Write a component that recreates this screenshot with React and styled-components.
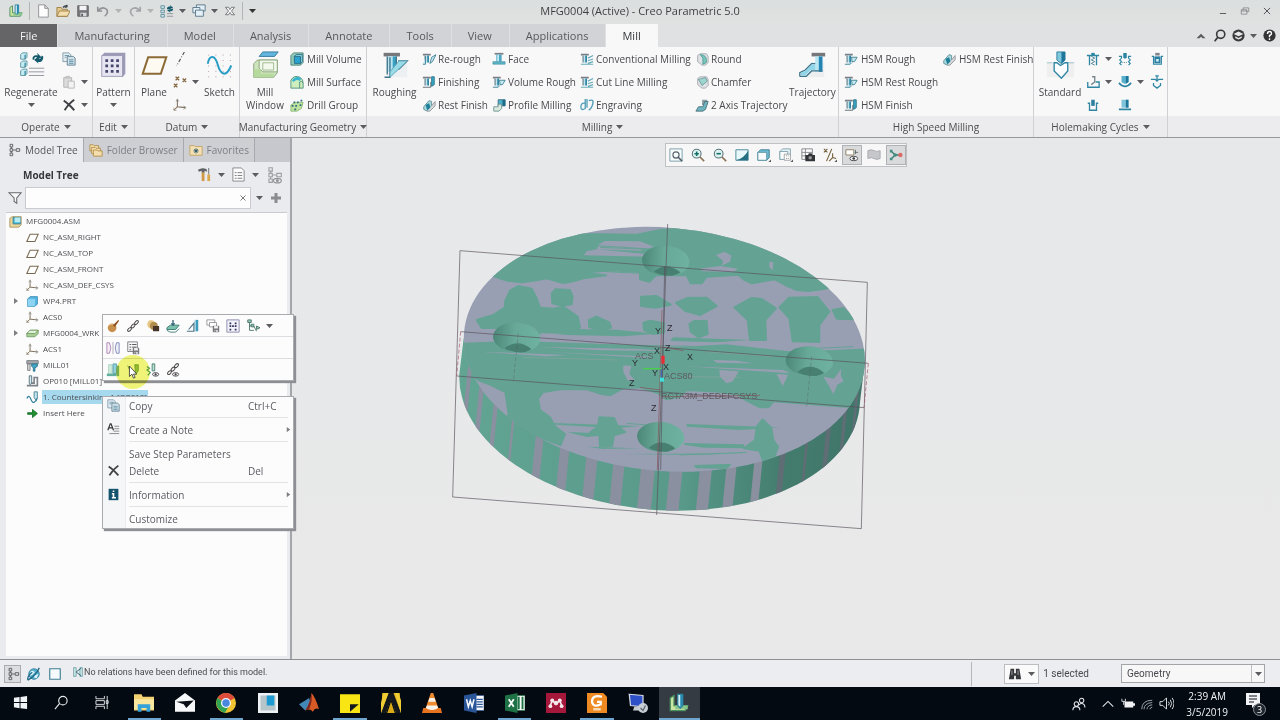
import React from 'react';
import styled, { createGlobalStyle } from 'styled-components';

const GlobalStyle = createGlobalStyle`
  * {
    box-sizing: border-box;
  }

  body {
    margin: 0;
    background: #e8e8e9;
    color: #4a4a4e;
    font-family: 'Open Sans', 'Noto Sans', sans-serif;
    font-size: 10px;
    line-height: 14px;
  }

  button,
  input,
  select,
  kbd {
    margin: 0;
    padding: 0;
    border: 0;
    background: none;
    color: inherit;
    font: inherit;
  }

  svg {
    display: block;
    flex: none;
  }
`;

/* ---------- icons ---------- */

const cutter = (
  <>
    <path d="M1 2h9v2H1z" fill="#7b7f84" />
    <path d="M3 4h5v8H3z" fill="#bfe3ee" />
    <path d="M6 4h2v8H6z" fill="#2f86a3" />
    <path d="M3.5 4v8" stroke="#55656d" />
  </>
);

const cubeStack = (
  <>
    <g fill="#c5ebf1" stroke="#5b95a3">
      <path d="M4 4l2-2h5v5l-2 2H4zM4 13l2-2h5v5l-2 2H4zM4 22l2-2h5v5l-2 2H4z" />
    </g>
    <path d="M9 4v5M9 13v5M9 22v5" stroke="#3d8ba1" strokeWidth="1.5" />
    <path d="M13 20h17M13 24h17M13 28h17" transform="translate(0 -1)" stroke="#8c9096" />
    <path d="M17 9c0-4 3-5 6-4l-1-3 5 5-5 3v-3c-2-1-3 0-3 3zM29 6c0 4-2 7-6 6l1 2-5-4 4-4v3c3 0 4-1 4-4z" fill="#125a6c" />
  </>
);

const creoLogo = (
  <>
    <path d="M1 4l3-2v8h11l-2 4H1z" fill="#c9e6a0" stroke="#4b8d62" />
    <path d="M5 10h10v3H5z" fill="#88c58c" />
    <path d="M7 1h4v9l-2 2-2-2z" fill="#d4f1fa" stroke="#2f7f99" />
    <path d="M9 1h2v9l-2 2z" fill="#2588b0" />
  </>
);

const csys = (
  <g fill="none" strokeWidth="1.2">
    <path d="M5 2v8l9 1" stroke="#7b6f60" />
    <path d="M5 10l-4 4" stroke="#8a6d4a" />
    <path d="M3.500 4L5 1l1.500 3M12 9l3 2-3 2M1 11v3h3" stroke="#8b857a" strokeWidth="0.800" />
  </g>
);

const chain = (
  <g fill="none" stroke="#4f4b4b" strokeWidth="1.200">
    <ellipse cx="4" cy="12" rx="2.700" ry="1.500" transform="rotate(-45 4 12)" />
    <ellipse cx="8" cy="8" rx="2.700" ry="1.500" transform="rotate(-45 8 8)" />
    <ellipse cx="12" cy="4" rx="2.700" ry="1.500" transform="rotate(-45 12 4)" />
  </g>
);

const floppy = (
  <g>
    <path d="M2 2h12v12H2z" fill="#77777b" stroke="#5d5d61" />
    <path d="M4 2h8v5H4z" fill="#f3f3f5" />
    <path d="M5 10h7v4H5z" fill="#d7d8dc" />
    <path d="M6 11h2v3H6z" fill="#5d5d61" />
  </g>
);

const eye = (
  <g fill="none" stroke="#3d3d41">
    <ellipse cx="11" cy="13" rx="3.500" ry="2" />
    <circle cx="11" cy="13" r="0.800" fill="#3d3d41" />
  </g>
);

const treeNodes = (
  <g fill="none" stroke="#55565a">
    <path d="M3.500 1.500h3v3h-3zM3.500 6.500h3v3h-3zM3.500 11.500h3v3h-3zM10.500 6.500h4v3h-4zM5 4.500v2M5 9.500v2M7 8h3" />
  </g>
);

const flyout = <path d="M13 16h3v-3z" fill="#55565a" />;

const icons = {
  creo: creoLogo,
  newFile: <path d="M3 1h7l4 4v10H3zM10 1v4h4" fill="#fdfdfe" stroke="#8b8c90" />,
  open: (
    <>
      <path d="M1 4h5l1 2h6v8H1z" fill="#e5c88c" stroke="#9a7b43" />
      <path d="M4 8h12l-3 6H1z" fill="#f6dfae" stroke="#9a7b43" />
      <path d="M8 4q3-3 5-1l-1-2M13 3l-3 1" fill="none" stroke="#3b4349" strokeWidth="1.500" />
    </>
  ),
  save: floppy,
  undo: <path d="M2 3v5h5M2 8q5-6 10-2 3 4-2 8" fill="none" stroke="#8f9194" strokeWidth="1.800" />,
  redo: <path d="M14 3v5H9M14 8Q9 2 4 6q-3 4 2 8" fill="none" stroke="#a1a3a6" strokeWidth="1.800" />,
  regenSmall: (
    <>
      <path d="M1 2h4v3H1zM1 7h4v3H1zM1 12h4v3H1z" fill="#cfe9ef" stroke="#5c8a97" />
      <path d="M8 11h7M8 14h7" stroke="#8c9096" />
      <path d="M8 6q0-4 4-3l-1-2 4 3-4 2M15 5q0 4-4 3l1 2-4-3" fill="#125a6c" />
    </>
  ),
  windows: (
    <g fill="#e3eff6" stroke="#547184">
      <path d="M5 1h10v7H5z" />
      <path d="M1 4h8v6H1z" />
      <path d="M4 7h9v7H4z" />
    </g>
  ),
  closeWindow: <path d="M2 3h4l2 3 2-3h4l-4 5 4 5h-4l-2-3-2 3H2l4-5z" fill="#f8f8f8" stroke="#56575b" />,
  minimize: <path d="M3 12h10" stroke="#55565a" strokeWidth="1.500" />,
  restore: <path d="M5 6V3h9v6h-3M2 6h9v7H2zM2 8h9" fill="none" stroke="#6b6c70" />,
  close: <path d="M3 3l10 10M13 3L3 13" stroke="#4e4f53" strokeWidth="1.500" />,
  chevronUp: <path d="M2 11l6-6 6 6h-4L8 9l-2 2z" fill="#5a5b5f" />,
  search: (
    <g fill="none" stroke="#3b3b3e" strokeWidth="2">
      <circle cx="9.500" cy="6.500" r="5" />
      <path d="M6 10l-4 5" />
    </g>
  ),
  learn: (
    <>
      <circle cx="8" cy="8" r="7.500" fill="#3b3b3e" />
      <path d="M2 6l6-3 6 3-6 3zM4 9l4 2 4-2v2l-4 2-4-2z" fill="#e9e9ea" />
    </>
  ),
  help: (
    <>
      <circle cx="8" cy="8" r="7.500" fill="#343437" />
      <path d="M5.500 6q0-3 2.500-3t2.500 2.500Q10.500 7 8 8v2M8 11.500v2" fill="none" stroke="#fff" strokeWidth="1.700" />
    </>
  ),
  regenerate: cubeStack,
  copy: (
    <>
      <path d="M1 1h7l2 2v8H1z" fill="#e4ecf2" stroke="#7d98a8" />
      <path d="M6 5h7l2 2v8H6z" fill="#cfdfe8" stroke="#5f7f91" />
      <path d="M3 4h5M3 6h2M8 9h5M8 11h5M8 13h5" stroke="#5f93a6" />
    </>
  ),
  paste: (
    <>
      <path d="M2 3h9v11H2z" fill="#dcdcdc" stroke="#b0b0b2" />
      <path d="M4 1h5v3H4z" fill="#c3c3c5" />
      <path d="M7 7h7v8H7z" fill="#f2f2f2" stroke="#b5b5b7" />
    </>
  ),
  cross: <path d="M2 3q5 3 12 11M14 2Q8 6 3 14" fill="none" stroke="#3f4044" strokeWidth="2.200" />,
  pattern: (
    <>
      <path d="M3 5l3-3h23v23l-3 4z" fill="#9c9ab6" />
      <path d="M3 5h23v23H3z" fill="#e6e5f1" stroke="#9b99b4" />
      <g fill="#45446c">
        <path d="M7 9h3v3H7zM13 9h3v3h-3zM19 9h3v3h-3zM7 15h3v3H7zM13 15h3v3h-3zM19 15h3v3h-3zM7 21h3v3H7zM13 21h3v3h-3zM19 21h3v3h-3z" />
      </g>
    </>
  ),
  plane: <path d="M9 7h20l-6 18H3z" fill="#fdfaf2" stroke="#8b6a35" strokeWidth="2.200" />,
  axis: <path d="M13 0L4 16" stroke="#55504a" strokeWidth="1.300" strokeDasharray="4 2 1 2" />,
  points: <path d="M3 2l4 4M7 2L3 6M11 4l4 4M15 4l-4 4M1 10l4 4M5 10l-4 4" stroke="#84673f" strokeWidth="1.400" />,
  csys,
  sketch: (
    <>
      <path d="M4 4v25M12 4v25M20 4v25M28 4v25" stroke="#b38f94" strokeDasharray="1 5" />
      <path d="M3 14C5 4 11 4 14 15s9 15 15 1" fill="none" stroke="#2b9ec5" strokeWidth="2.200" />
    </>
  ),
  millWindow: (
    <>
      <path d="M13 1h17l-4 5H9z" fill="#62b5dd" stroke="#34789a" />
      <path d="M3 14l4-4h22v14l-4 5H3z" fill="#cfe3bd" stroke="#85a278" />
      <path d="M9 10h20v13H13l-4-4z" fill="#f4f9ee" stroke="#85a278" />
      <path d="M3 20h8v5h14v4H3z" fill="#b6d99d" />
      <path d="M13 13h12v8H13z" fill="none" stroke="#98b58a" />
    </>
  ),
  millVolume: (
    <>
      <path d="M1 4l3-3h11v11l-3 3H1z" fill="#8fc9b5" stroke="#4e7f78" />
      <path d="M5 5h7v8H5z" fill="#2aa1cf" stroke="#246b86" />
      <path d="M5 5l2-2h7v8l-2 2V5z" fill="#9be0ef" stroke="#246b86" />
    </>
  ),
  millSurface: (
    <>
      <path d="M1 15V6q4-7 11-3 3 2 3 6v6z" fill="#cfeebd" stroke="#4b8f79" />
      <path d="M2 6q5-7 11-2l-2 3Q8 4 4 8z" fill="#3bb6ce" />
      <path d="M11 15V8q2-2 4 1" fill="none" stroke="#4b8f79" />
    </>
  ),
  drillGroup: (
    <>
      <path d="M1 8l5-3h9l-2 7-5 3H1z" fill="#bfe39d" stroke="#8cb877" />
      <path d="M4 4h2v2H4zM8 4h2v2H8zM12 2h2v2h-2zM2 8h2v2H2zM6 8h2v2H6zM11 7h2v2h-2zM5 12h2v2H5z" fill="#2d6d82" />
    </>
  ),
  roughing: (
    <>
      <path d="M14 12h16v17H8z" fill="#edf0f2" />
      <path d="M4 2h18v4H4z" fill="#77787c" />
      <path d="M8 6h10v17H8z" fill="#b9e6f2" />
      <path d="M14 6h4v17h-4z" fill="#3aa0c4" />
      <path d="M8 6v20M5 29h6V7M18 6v14h3l9-9H20" fill="none" stroke="#3f7489" strokeWidth="1.500" />
      <path d="M21 11h9L11 29v-6z" fill="#9adbe8" stroke="#5fa8b9" />
    </>
  ),
  rerough: (
    <>
      {cutter}
      <path d="M1 14h3V5M9 13l3-2 4-8-5 3z" fill="#bfe6ec" stroke="#3e7f92" />
    </>
  ),
  finishing: (
    <>
      {cutter}
      <path d="M1 14h9V8" fill="none" stroke="#55656d" />
      <path d="M11 2h3v9l-3 2z" fill="#39a7c4" stroke="#2c7288" />
    </>
  ),
  restFinish: (
    <>
      <path d="M2 10L8 3l3 1v8l-5 3-4-2z" fill="#a8d9dd" stroke="#5e8d94" />
      <path d="M4 8l4-2 2 5-4 3z" fill="#1f7f9a" />
      <path d="M11 9l4-5v5l-6 6H6" fill="#d7d9db" stroke="#909498" />
    </>
  ),
  face: (
    <>
      <path d="M3 1h10v2H3z" fill="#7b7f84" />
      <path d="M5 3h6v8H5z" fill="#4aa5c1" />
      <path d="M6 3h2v8H6z" fill="#c7ecf5" />
      <path d="M1 11h14v3H1z" fill="#5bb3c8" stroke="#31798e" strokeWidth="0.500" />
    </>
  ),
  volumeRough: (
    <>
      {cutter}
      <path d="M1 14h6l2-2M8 6h7l-3 5H9v-3z" fill="#c4e9ee" stroke="#3e7f92" />
    </>
  ),
  profile: (
    <>
      <path d="M7 2h8v7H7z" fill="#4eb0cc" stroke="#35707f" />
      <path d="M12 2h3v7h-3z" fill="#1d6b86" />
      <path d="M2 10h5V7h4v5l-3 3H2z" fill="#d9eadd" stroke="#6d8f93" />
    </>
  ),
  conventional: (
    <>
      {cutter}
      <path d="M9 7l6-3M9 10l6-2M9 13l6-2M1 14h14" stroke="#68aab8" strokeWidth="1.300" />
    </>
  ),
  engraving: <path d="M6 1v11q-5 3-5-2t5-4M8 1v10M10 14q5-4 5-11M10 3q5-2 5 2" fill="none" stroke="#4f9db5" strokeWidth="1.500" />,
  round: (
    <>
      <path d="M3 4l3-2h7l2 3v7l-3 3H8l-5-4z" fill="#dfe1e4" stroke="#a4a8ae" />
      <path d="M6 3q8 0 7 9l-4 2V7z" fill="#79c7bb" stroke="#4f9a98" />
    </>
  ),
  chamfer: (
    <>
      <path d="M3 4l3-2h7l2 3v7l-3 3H8l-5-4z" fill="#dfe1e4" stroke="#a4a8ae" />
      <path d="M4 5l8-2 2 4-6 5z" fill="#9dd6cf" stroke="#6b989c" />
    </>
  ),
  twoAxis: (
    <>
      <path d="M8 2h6v6H8z" fill="#8fa0a7" />
      <path d="M1 15l3-5h5l2-6h4l-3 9-3 2z" fill="#6fb5bf" stroke="#4a6f77" />
    </>
  ),
  trajectory: (
    <>
      <path d="M14 12h15v17H4z" fill="#eceef0" />
      <path d="M15 2h15v4H15z" fill="#77787c" />
      <path d="M19 6h8v17h-8z" fill="#b9e6f2" />
      <path d="M23 6h4v17h-4z" fill="#2485b4" />
      <path d="M2 28h7l6-6h12M2 28v-4l6-3 7-7h4" fill="none" stroke="#3f7489" strokeWidth="1.500" />
      <path d="M3 24l5-2 7-7h4v6h-5l-6 6H3z" fill="#8fd6e8" />
    </>
  ),
  standard: (
    <>
      <path d="M1 13h30v16H1z" fill="#efefef" />
      <path d="M1 13h6M25 13h6" stroke="#98bfcb" />
      <path d="M12 1h9v9l-4 4-5-4z" fill="#7fc9de" stroke="#2d7c98" />
      <path d="M17 1h4v9l-4 4z" fill="#1e769a" />
      <path d="M9 13h3l4 3 5-3h3v9l-7 8-8-8z" fill="#fbfdfe" stroke="#2f86a3" strokeWidth="1.500" />
    </>
  ),
  drillDeep: (
    <>
      <path d="M1 4h3v11M15 4h-3v11M4 4h8" fill="none" stroke="#2f86a3" strokeWidth="1.500" />
      <path d="M6 1h4v3H6z" fill="#2f86a3" />
      <path d="M6 5l4 2-4 2 4 2-4 2 4 2" fill="none" stroke="#4b7d8e" />
    </>
  ),
  drillTap: (
    <>
      <path d="M1 5h3v2l-2 2 2 2-2 2 2 2M15 5h-3v2l2 2-2 2 2 2-2 2" fill="none" stroke="#2f86a3" strokeWidth="1.300" />
      <path d="M6 1h4v5l-2 2-2-2z" fill="#2f86a3" />
      <path d="M5 12h6" stroke="#4b7d8e" strokeDasharray="1 1" />
    </>
  ),
  drillWeb: (
    <>
      <path d="M2 5h2v9h9V5h2" fill="none" stroke="#2f86a3" strokeWidth="1.300" />
      <path d="M6 1h5v3H6z" fill="#808488" />
      <path d="M5 5h7v8H5z" fill="#2b7fa0" />
      <path d="M7 8h3v3H7z" fill="#d2edf5" />
    </>
  ),
  drillFace: (
    <>
      <path d="M2 8v6h13V8h-4" fill="none" stroke="#2f86a3" strokeWidth="1.500" />
      <path d="M7 2h3v6l-4 3" fill="none" stroke="#74858d" strokeWidth="1.500" />
    </>
  ),
  drillBore: (
    <>
      <path d="M4 1h8v7q-4 4-8 0z" fill="#57b0cc" />
      <path d="M9 1h3v7l-3 2z" fill="#1e769a" />
      <path d="M1 9q7 8 14 0" fill="none" stroke="#2f86a3" strokeWidth="1.800" />
    </>
  ),
  drillSink: <path d="M1 5h5l2 2 2-2h5M4 9v3l4 3 4-3V9M8 1v6M6 1h4" fill="none" stroke="#2f86a3" strokeWidth="1.500" />,
  drillRib: (
    <>
      <path d="M2 6h2v8h8V6h2" fill="none" stroke="#2f86a3" strokeWidth="1.500" />
      <path d="M6 2h4v7H6z" fill="#2b7fa0" />
    </>
  ),
  drillFlat: (
    <>
      <path d="M4 2h8v9H4z" fill="#7fc3d8" />
      <path d="M9 2h3v9H9z" fill="#1e769a" />
      <path d="M1 12h14v2H1z" fill="#2f86a3" />
    </>
  ),
  tree: treeNodes,
  folders: (
    <g fill="#f4dfad" stroke="#b18d4a">
      <path d="M1 2h4l1 1h5v6H1z" />
      <path d="M3 5h4l1 1h5v6H3z" />
      <path d="M5 8h4l1 1h5v6H5z" />
    </g>
  ),
  favorites: (
    <>
      <path d="M1 3h5l1 1h8v10H1z" fill="#f3e0b4" stroke="#c3a15f" />
      <path d="M8 6v6M5 9h6M6 7l4 4M10 7l-4 4" stroke="#22546a" />
    </>
  ),
  tools: (
    <>
      <path d="M1 3q4-3 9-1l1 3-3-1v2H5V4L2 5z" fill="#5f6165" />
      <path d="M5 6h3v9H5z" fill="#d09a48" />
      <path d="M12 1h1v7h-1z" fill="#6d7175" />
      <path d="M11 8h3v7h-3z" fill="#dba74d" />
    </>
  ),
  listFile: (
    <>
      <path d="M2 1h9l3 3v11H2z" fill="#fdfdfe" stroke="#85868a" />
      <path d="M4 6h2M4 9h2M4 12h2M7 6h5M7 9h5M7 12h5" stroke="#77787c" />
    </>
  ),
  treeHidden: (
    <g opacity="0.500">
      {treeNodes}
      {eye}
    </g>
  ),
  filter: <path d="M1 2h14L10 8v6l-3-2V8z" fill="#f8f8f9" stroke="#66676b" strokeWidth="1.200" />,
  plus: <path d="M8 3v10M3 8h10" stroke="#8b8c90" strokeWidth="3" />,
  assembly: (
    <>
      <path d="M1 4l3-2h11v10l-3 3H1z" fill="#ecd59a" stroke="#a2905a" />
      <path d="M5 3h9v8H5z" fill="#46b7cc" stroke="#357d8f" />
      <path d="M7 3h7v6H7z" fill="#b6ebf2" />
    </>
  ),
  planeSmall: <path d="M5 4h10l-4 9H1z" fill="#fff" stroke="#77694f" strokeWidth="1.300" />,
  part: (
    <>
      <path d="M2 5l3-3h9v9l-3 3H2z" fill="#58b7e4" stroke="#2f82ab" />
      <path d="M2 5h9v9H2z" fill="#8dd4f3" />
    </>
  ),
  workpiece: (
    <>
      <path d="M1 8l4-4h10v4l-4 4H1z" fill="#a7cf94" stroke="#6e9763" />
      <path d="M1 8l4-4h10l-4 4z" fill="#e3f3d9" stroke="#6e9763" />
    </>
  ),
  machine: (
    <>
      <path d="M1 2h14v4H1z" fill="#a5a9ad" stroke="#6e7276" />
      <path d="M2 6h3v8H2z" fill="#d8dadc" stroke="#6e7276" />
      <path d="M7 6h7v3l-3 2v4H9v-4L7 9z" fill="#42a5c2" stroke="#226d86" />
    </>
  ),
  operation: (
    <>
      <path d="M1 13h13V3h-4v7H6" fill="none" stroke="#7d8388" strokeWidth="2" />
      <path d="M4 1h3v9l-2 2-1-2z" fill="#d9eef4" stroke="#44616d" />
    </>
  ),
  step: (
    <>
      <path d="M1 9q3-5 5 1t5 3q2-1 3-5" fill="none" stroke="#2a7d99" strokeWidth="1.500" />
      <path d="M10 1h4v7l-2 3-2-3z" fill="#c1e4ee" stroke="#39798f" />
    </>
  ),
  insert: <path d="M2 7h6V3l6 5-6 5V9H2z" fill="#1f9133" stroke="#0c6a1e" />,
  expand: <path d="M4 2l8 6-8 6z" fill="#7e7f83" />,
  paint: (
    <>
      <circle cx="7" cy="10" r="5" fill="#c7914d" />
      <path d="M8 7l6-6 1 1-5 7z" fill="#8d4f21" />
      <path d="M4 7q2-2 4-1" stroke="#f1d6a6" fill="none" />
    </>
  ),
  chain,
  spheres: (
    <>
      <circle cx="6" cy="6" r="4.500" fill="#e4c583" />
      <circle cx="9" cy="8" r="4.500" fill="#b08c4c" />
      <path d="M8 8h7v6H8z" fill="#453427" />
    </>
  ),
  editStep: (
    <>
      <path d="M1 10l4-3h10l-4 5H1z" fill="#7bc2ae" stroke="#35766b" />
      <path d="M1 13l4 2h6l4-4" fill="none" stroke="#35766b" />
      <path d="M8 1v6M6 5l2 2 2-2" fill="none" stroke="#316177" strokeWidth="1.500" />
    </>
  ),
  toolPath: (
    <>
      <path d="M10 1h4v13h-4z" fill="#3d9bbb" />
      <path d="M10 1h1v13h-1z" fill="#d6eef5" />
      <path d="M1 14h8V5L3 12" fill="none" stroke="#4b7382" strokeWidth="1.300" />
    </>
  ),
  copySave: (
    <>
      <path d="M1 1h9v6H1z" fill="#fff" stroke="#929397" />
      <path d="M4 4h8v5H4z" fill="#fff" stroke="#929397" />
      <g transform="translate(7 7) scale(0.550)">{floppy}</g>
    </>
  ),
  patternSmall: (
    <>
      <path d="M1 1h14v14H1z" fill="#f3f3fb" stroke="#8483a5" />
      <path d="M4 4h2v2H4zM10 4h2v2h-2zM4 7h2v2H4zM10 7h2v2h-2zM4 11h2v2H4zM10 11h2v2h-2zM7 7h2v2H7z" fill="#33325c" />
    </>
  ),
  treeFlag: (
    <>
      <path d="M2 1h4v3H2zM6 6h3v3H6zM4 4v4h2M9 8l3 6M12 8l4 2-4 2z" fill="#9ac9b9" stroke="#477266" />
      <path d="M4 8v5h5" fill="none" stroke="#477266" />
    </>
  ),
  mirror: (
    <>
      <path d="M1 2h3q3 6 0 12H1z" fill="#f7edf7" stroke="#a77fb0" />
      <path d="M15 2h-3q-3 6 0 12h3z" fill="#eef1fa" stroke="#7d82b5" />
      <path d="M8 1v14" stroke="#aaa4b2" />
    </>
  ),
  listSave: (
    <>
      <path d="M2 1h11v11H2z" fill="#f9f9fa" stroke="#77787c" />
      <path d="M4 4h2M4 7h2M4 10h2M7 4h5M7 7h5" stroke="#44454a" />
      <g transform="translate(7 7) scale(0.550)">{floppy}</g>
    </>
  ),
  toolBlock: (
    <>
      <path d="M1 12h11v3H1z" fill="#5fae9e" />
      <path d="M3 2h4v10H3z" fill="#d3eedd" stroke="#a5cfba" />
      <path d="M8 1h4v11H8z" fill="#8fd0dc" stroke="#5ba0ad" />
      <path d="M12 3h3v12h-3z" fill="#7fb39f" />
    </>
  ),
  playStep: <path d="M10 2h4v7l-3 4zM2 3l4 9 3 2" fill="#9cc65a" stroke="#75a044" />,
  stepEye: (
    <>
      <path d="M1 4l3 2-3 2 4 3-3 3" fill="none" stroke="#56a081" strokeWidth="1.300" />
      <path d="M7 1h3v8H7z" fill="#c2e3cd" stroke="#3e7a71" />
      {eye}
    </>
  ),
  chainEye: (
    <>
      <g transform="translate(0 -1)">{chain}</g>
      {eye}
    </>
  ),
  note: (
    <>
      <path d="M1 9l3-8h1l3 8M2 6h5" fill="none" stroke="#37383c" strokeWidth="1.500" />
      <path d="M9 4h6M9 7h6M8 10h7M3 13h12" stroke="#77787c" />
    </>
  ),
  info: (
    <>
      <path d="M2 1h12v14H2z" fill="#14526d" />
      <path d="M8 3v2M6 7h2v5M6 12h5" fill="none" stroke="#fff" strokeWidth="2" />
    </>
  ),
  zoomFit: (
    <>
      <path d="M1 1h14v14H1z" fill="#f5fafb" stroke="#7298a4" />
      <circle cx="8" cy="8" r="3.500" fill="none" stroke="#53606a" strokeWidth="1.300" />
      <path d="M10 10l5 5" stroke="#53606a" strokeWidth="1.800" />
    </>
  ),
  zoomIn: (
    <>
      <circle cx="6.500" cy="6.500" r="5" fill="#dff2f1" stroke="#56767b" strokeWidth="1.200" />
      <path d="M4 6.500h5M6.500 4v5" stroke="#117065" strokeWidth="1.800" />
      <path d="M10 10l5 5" stroke="#8d7657" strokeWidth="2" />
    </>
  ),
  zoomOut: (
    <>
      <circle cx="6.500" cy="6.500" r="5" fill="#dff2f1" stroke="#56767b" strokeWidth="1.200" />
      <path d="M4 6.500h5" stroke="#117065" strokeWidth="1.800" />
      <path d="M10 10l5 5" stroke="#8d7657" strokeWidth="2" />
    </>
  ),
  repaint: (
    <>
      <path d="M1 2h14v12H1z" fill="#e8f7f9" stroke="#418294" />
      <path d="M15 3v11H1q9-2 14-11z" fill="#246f81" />
    </>
  ),
  display: (
    <>
      <path d="M1 5l3-3h10v9l-3 3H1z" fill="#6dbbd4" stroke="#3e7a8d" />
      <path d="M1 5h10v9H1z" fill="#f8fcfd" stroke="#5f95a5" />
      {flyout}
    </>
  ),
  views: (
    <>
      <path d="M1 4l3-3h9v8l-3 4H1z" fill="#e6f1f4" stroke="#7ba0ab" />
      <path d="M1 4h9v9H1z" fill="#fafdfe" stroke="#7ba0ab" />
      <path d="M6 7h7v7H6z" fill="#fff" stroke="#9b9ca0" />
      <path d="M8 9h4M8 12h4" stroke="#77787c" strokeDasharray="1 1" />
      {flyout}
    </>
  ),
  camera: (
    <>
      <path d="M1 1h12v12H1zM1 5h12M1 9h12M5 1v12" fill="#fff" stroke="#7d7e82" />
      <path d="M5 8h3l1-2h3l1 2h3v7H5z" fill="#333438" />
      <circle cx="10.500" cy="11" r="2" fill="#97989c" />
    </>
  ),
  datums: (
    <>
      <path d="M1 1l4 4M5 1L1 5M10 1L4 15M11 6v5l4 1M11 11l-4 4" fill="none" stroke="#76633f" strokeWidth="1.300" />
      {flyout}
    </>
  ),
  annotations: (
    <>
      <path d="M1 2h9v6H1z" fill="#fff" stroke="#8a7a5c" />
      <path d="M11 5h4M12 2v5" stroke="#5e6b6e" />
      <ellipse cx="10" cy="12" rx="4.500" ry="2.500" fill="#fff" stroke="#38393d" />
      <circle cx="10" cy="12" r="1.500" fill="#38393d" />
    </>
  ),
  shade: <path d="M1 3q4-2 7 0t7 0v9q-4 2-7 0t-7 0z" fill="#c6c7ca" stroke="#a5a6aa" />,
  spin: (
    <>
      <path d="M7 8L2 3M7 8l-5 5M7 8h5" stroke="#35756c" strokeWidth="1.500" />
      <circle cx="7" cy="8" r="2" fill="#438f83" />
      <circle cx="13" cy="8" r="2.500" fill="#de6a68" />
      <path d="M1 2h3v3H1zM1 11h3v3H1z" fill="#438f83" />
    </>
  ),
  globe: (
    <>
      <circle cx="8" cy="8" r="6" fill="#58b1cf" stroke="#2f7f9d" />
      <path d="M4 5q3-2 5 1l-3 3-3 1zM9 9l4-1-2 5-3-1z" fill="#d8f2f8" />
      <path d="M1 15Q10 10 14 1M1 15q-1-5 5-9" fill="none" stroke="#226a88" strokeWidth="1.500" />
    </>
  ),
  pane: <path d="M2 2h12v12H2z" fill="#f5fbfd" stroke="#3e7c93" strokeWidth="1.300" />,
  relations: (
    <>
      <path d="M1 1h4v14H1zM11 1h4v14h-4z" fill="#cfe6e8" stroke="#4a8a92" />
      <path d="M13 2L5 8l8 6" fill="none" stroke="#2f6470" strokeWidth="1.500" />
    </>
  ),
  binoculars: (
    <>
      <path d="M3 2h4v5h2V2h4l2 12H9v-4H7v4H1z" fill="#35363a" />
      <path d="M4 4h1v5H4zM11 4h1v5h-1z" fill="#a7a8ac" />
    </>
  ),
  start: <path d="M1 3l6-1v5.500H1zM8 2l7-1v6.500H8zM1 8.500h6V14l-6-1zM8 8.500h7V15l-7-1z" fill="#f1f4f6" />,
  taskSearch: (
    <g fill="none" stroke="#e8ebee" strokeWidth="1.200">
      <circle cx="9.500" cy="6" r="4.500" />
      <path d="M6 9l-5 6" />
    </g>
  ),
  taskView: <path d="M1 1v3h9V1M1 15v-3h9v3M1 6h9v4H1zM13 1v14M12 6h2v3h-2z" fill="none" stroke="#dfe3e6" />,
  explorer: (
    <>
      <path d="M0 1h6l1 2h9v11H0z" fill="#f3d272" />
      <path d="M0 5h16v8H0z" fill="#fae79f" />
      <path d="M3 15V9h10v6h-3v-3H6v3z" fill="#35a3d9" />
    </>
  ),
  mail: (
    <>
      <path d="M0 6l8-6 8 6v9H0z" fill="#f7f8f9" />
      <path d="M1 7l14-1-6 6-2-3z" fill="#0a0f16" />
    </>
  ),
  chrome: (
    <>
      <circle cx="8" cy="8" r="8" fill="#f1c232" />
      <path d="M8 8L1 4q3-4 7-4t7 4z" fill="#de4c3c" />
      <path d="M8 8L1 4q-3 8 6 12l3-5z" fill="#31a352" />
      <circle cx="8" cy="8" r="4" fill="#f5f8fa" />
      <circle cx="8" cy="8" r="3" fill="#4a87df" />
    </>
  ),
  blueApp: (
    <>
      <path d="M0 0h16v16H0z" fill="#eef2f4" />
      <path d="M2 2h12v12H2z" fill="#b6c5ca" />
      <path d="M7 2h6v8H7z" fill="#1d9ad1" />
    </>
  ),
  matlab: (
    <>
      <path d="M0 9l5-3 3-2 2 5-5 5z" fill="#4387b8" />
      <path d="M5 14Q9 8 10 0q3 3 6 13-3-2-5 2-2-3-6-1z" fill="#d85b25" />
      <path d="M10 0q-1 8-5 14l3-1q3-6 2-13z" fill="#7b2720" />
    </>
  ),
  sticky: (
    <>
      <path d="M0 1h16v15H0z" fill="#f9e414" />
      <path d="M8 9h7l-7 6z" fill="#15191e" />
    </>
  ),
  ansys: (
    <>
      <path d="M1 0h5l2 3 2-3h5l1 16h-4L8 4 4 16H0z" fill="#e2b719" />
      <path d="M6 0h4l6 16h-4L8 5 4 16H0z" fill="#12171d" />
      <path d="M6 0L0 16V8l2-8zM11 0l5 16V6l-2-6z" fill="#f0cc35" />
      <path d="M5 16l3-9 3 9z" fill="#d9ab18" />
    </>
  ),
  vlc: (
    <>
      <path d="M1 12h14l1 4H0z" fill="#e8731f" />
      <path d="M7 0h2l4 12q-5 3-10 0z" fill="#ef8a2e" />
      <path d="M6 4h4l1 3H5zM4 10h8l1 2q-5 3-10 0z" fill="#f6f2ec" />
    </>
  ),
  word: (
    <>
      <path d="M7 2h9v12H7z" fill="#f6f9fc" stroke="#2a5699" strokeWidth="0.500" />
      <path d="M10 5h5M10 7h5M10 9h5M10 11h5" stroke="#2a5699" />
      <path d="M0 2l10-2v16L0 14z" fill="#2a5699" />
      <path d="M2 5l1.500 6L5 6l1.500 5L8 5" fill="none" stroke="#fff" strokeWidth="1.200" />
    </>
  ),
  excel: (
    <>
      <path d="M7 2h9v12H7z" fill="#f4faf6" stroke="#1e7145" strokeWidth="0.500" />
      <path d="M11 3v10M14 3v10" stroke="#1e7145" strokeWidth="1.500" />
      <path d="M0 2l10-2v16L0 14z" fill="#1e7145" />
      <path d="M3 5l4 6M7 5l-4 6" stroke="#fff" strokeWidth="1.400" />
    </>
  ),
  mendeley: (
    <>
      <path d="M0 0h16v16H0z" fill="#a5183c" />
      <g fill="#f5e8eb">
        <circle cx="8" cy="8" r="1.800" />
        <circle cx="5" cy="6" r="1.600" />
        <circle cx="11" cy="6" r="1.600" />
        <circle cx="3.500" cy="10.500" r="1.500" />
        <circle cx="12.500" cy="10.500" r="1.500" />
      </g>
      <path d="M3.500 10L5 6l3 3 3-3 1.500 4" fill="none" stroke="#f5e8eb" strokeWidth="1.300" />
    </>
  ),
  foxit: (
    <>
      <path d="M0 0h13l3 3v13H0z" fill="#ef8a22" />
      <path d="M12 3Q4 1 4 7q1 5 7 2V7H8" fill="none" stroke="#fff" strokeWidth="1.800" />
      <path d="M5 13h6" stroke="#fbd9ae" strokeWidth="2" />
    </>
  ),
  remote: (
    <>
      <path d="M1 1l11 1v9L2 10z" fill="#2d50c9" stroke="#d5d9e3" />
      <path d="M5 11h4v3H4z" fill="#c5cad1" />
      <circle cx="12" cy="12" r="4" fill="#c9ced4" />
      <path d="M10 12l2 2 2-4" fill="none" stroke="#5b6570" />
    </>
  ),
  people: (
    <g fill="none" stroke="#e4e7ea" strokeWidth="1.200">
      <circle cx="11" cy="4" r="2.500" />
      <circle cx="5" cy="8" r="2.500" />
      <path d="M1 15q0-4 4-4t4 4M8 9q3-3 6 0l1 3" />
    </g>
  ),
  trayUp: <path d="M2 11l6-6 6 6" fill="none" stroke="#e4e7ea" strokeWidth="1.200" />,
  battery: (
    <>
      <path d="M4 5h10v7H4zM14 7h2v3h-2z" fill="#f0f2f4" />
      <path d="M1 2v3h4V2M3 5v4" fill="none" stroke="#e4e7ea" />
    </>
  ),
  wifi: <path d="M1 15Q1 3 15 3M4 15q0-8 11-9M8 15q0-5 7-6M12 15q0-2 3-3" fill="none" stroke="#9da3a9" strokeWidth="1.300" />,
  speaker: <path d="M1 6h3l4-4v12l-4-4H1zM10 6q2 2 0 4M12 4q3 4 0 8M14 2q4 6 0 12" fill="none" stroke="#e4e7ea" />,
  cursor: <path d="M3 0v13l3-3 2 5 2-1-2-4h4z" fill="#fff" stroke="#333" />
};

const Icon = ({ name, size = 14, box = 16 }) => (
  <svg width={size} height={size} viewBox={`0 0 ${box} ${box}`} aria-hidden="true">
    {icons[name]}
  </svg>
);

const Caret = ({ color = '#5b5c60' }) => (
  <svg width="7" height="4" viewBox="0 0 7 4" aria-hidden="true">
    <path d="M0 0h7L3.500 4z" fill={color} />
  </svg>
);

/* ---------- title bar ---------- */

const Page = styled.div`
  position: relative;
  display: flex;
  flex-direction: column;
  min-height: 100vh;
`;

const TitleBar = styled.header`
  display: grid;
  grid-template-columns: 1fr auto 1fr;
  align-items: center;
  height: 24px;
  padding-bottom: 2px;
  background: linear-gradient(#dcdfdf, #e0e1e1);
`;

const QuickAccess = styled.div`
  display: flex;
  align-items: center;
  gap: 6px;
  height: 22px;
  padding-left: 9px;
`;

const IconButton = styled.button`
  display: flex;
  align-items: center;
  justify-content: center;
  gap: ${({ $gap }) => $gap || 0}px;
`;

const Divider = styled.span`
  width: 1px;
  height: ${({ $tall }) => ($tall ? 24 : 18)}px;
  background: #b4b5b8;
  ${({ $tall }) => $tall && 'margin-right: 28px;'}
`;

const Title = styled.h1`
  margin: 0;
  color: #3e3f42;
  font-size: 11px;
  font-weight: 400;
`;

const WindowControls = styled.div`
  display: flex;
  justify-content: flex-end;
  gap: 12px;
  padding-right: 8px;
`;

/* ---------- ribbon ---------- */

const TabBar = styled.nav`
  display: flex;
  height: 23px;
  background: #e0e1e2;
`;

const RibbonTab = styled.button`
  padding: 0 17px 0 16px;
  border-right: 1px solid #dfe0e2;
  background: #d1d3d6;
  color: #58595d;
  font-size: 11px;

  ${({ $file }) => $file && 'padding: 0 20px; background: #656568; color: #f4f4f4;'}
  ${({ $active }) => $active && 'background: #f8f8f9; color: #36373a;'}
`;

const TabTools = styled.div`
  display: flex;
  align-items: center;
  gap: 6px;
  margin-left: auto;
  padding-right: 4px;
`;

const Ribbon = styled.section`
  display: flex;
  border-bottom: 1px solid #96989b;
  background: #f8f8f9;
`;

const Group = styled.div`
  display: flex;
  flex: 0 0 ${({ $width }) => $width}px;
  flex-direction: column;
  min-width: 0;
  border-right: 1px solid #cfd0d3;
`;

const GroupBody = styled.div`
  display: grid;
  grid-template-columns: ${({ $columns }) => $columns};
  height: 69px;
`;

const GroupLabel = styled.button`
  display: flex;
  align-items: center;
  justify-content: center;
  gap: 4px;
  height: 21px;
  background: #ececee;
  color: #4b4c50;
  white-space: nowrap;
`;

const RibbonFill = styled.div`
  flex: 1;
  background: linear-gradient(#f8f8f9 69px, #ececee 69px);
`;

const BigButton = styled.button`
  display: flex;
  flex-direction: column;
  align-items: center;
  padding-top: 4px;
  line-height: 13px;

  svg:first-child {
    margin-bottom: 6px;
  }

  svg + span + svg {
    margin-top: 4px;
  }
`;

const Stack = styled.div`
  display: grid;
  grid-template-rows: repeat(3, 23px);
  justify-content: start;
  justify-items: start;
`;

const RowButton = styled.button`
  display: flex;
  align-items: center;
  gap: ${({ $gap }) => $gap || 2}px;
  white-space: nowrap;
`;

const CycleGrid = styled.div`
  display: grid;
  grid-template-columns: 32px 32px 1fr;
  grid-template-rows: repeat(3, 23px);
  justify-items: start;
`;

const Big = ({ icon, label, second, caret }) => (
  <BigButton>
    <Icon name={icon} size={29} box={32} />
    <span>{label}</span>
    {second && <span>{second}</span>}
    {caret && <Caret />}
  </BigButton>
);

const Rows = ({ items, gap }) => (
  <Stack>
    {items.map(([icon, label, caret]) => (
      <RowButton key={icon + label} $gap={gap} aria-label={label ? undefined : icon}>
        <Icon name={icon} />
        {label}
        {caret && <Caret />}
      </RowButton>
    ))}
  </Stack>
);

const RibbonGroup = ({ label, width, columns, plain, children }) => (
  <Group $width={width}>
    <GroupBody $columns={columns}>{children}</GroupBody>
    <GroupLabel>
      {label}
      {!plain && <Caret />}
    </GroupLabel>
  </Group>
);

/* ---------- model tree ---------- */

const Main = styled.main`
  display: flex;
  flex: 1;
`;

const Sidebar = styled.aside`
  display: flex;
  flex: 0 0 292px;
  flex-direction: column;
  padding-bottom: 3px;
  border-right: 2px solid #a3a6ab;
  background: #e9ebee;
`;

const PanelTabs = styled.div`
  display: flex;
  height: 24px;
  background: #c6c8cd;
`;

const PanelTab = styled.button`
  display: flex;
  align-items: center;
  gap: 4px;
  padding: 0 5px;
  border-right: 1px solid #a6a9af;
  background: ${({ $active }) => ($active ? '#e9ebee' : '#cdcfd3')};
  color: ${({ $active }) => ($active ? '#55565b' : '#7d7f84')};

  &:first-child {
    padding-left: 7px;
  }
`;

const PanelHead = styled.div`
  display: flex;
  align-items: center;
  gap: 6px;
  height: 25px;
  padding: 0 7px 0 23px;

  h2 {
    flex: 1;
    margin: 0;
    color: #37383b;
    font-size: 10px;
    font-weight: 700;
  }
`;

const SearchRow = styled.div`
  display: flex;
  align-items: center;
  gap: 5px;
  height: 22px;
  margin-bottom: 3px;
  padding: 0 6px 0 8px;
`;

const SearchBox = styled.div`
  display: flex;
  flex: 1;
  align-items: center;
  height: 22px;
  margin-left: -2px;
  padding-right: 3px;
  border: 1px solid #c9cbd0;
  background: #fdfdfd;

  input {
    flex: 1;
    min-width: 0;
    height: 20px;
    padding: 0 4px;
    outline: 0;
  }
`;

const Tree = styled.ul`
  flex: 1;
  margin: 0 3px 0 6px;
  padding: 0;
  border-top: 1px solid #c9cbd0;
  background: #fcfcfc;
  font-size: 8px;
  list-style: none;
`;

const TreeRow = styled.li`
  display: flex;
  align-items: center;
  gap: 3px;
  height: 16px;
  padding-left: ${({ $root }) => ($root ? 3 : 6)}px;
  color: #4d4e52;
  white-space: nowrap;

  span {
    padding: 0 1px;
    background: ${({ $selected }) => ($selected ? '#a6d8ee' : 'none')};
  }
`;

const Twisty = styled.i`
  width: 11px;
`;

/* ---------- viewport ---------- */

const Viewport = styled.section`
  display: grid;
  flex: 1;
  background: linear-gradient(#e7e8ea, #e9e9e9);

  > * {
    grid-area: 1 / 1;
  }
`;

const Scene = styled.svg`
  width: 100%;
  height: 100%;
`;

const ViewTools = styled.div`
  display: flex;
  place-self: start center;
  gap: 2px;
  margin-top: 5px;
  padding: 1px 0;
  border: 1px solid #c0c1c5;
  background: #f7f7f8;
`;

const ViewTool = styled.button`
  display: flex;
  align-items: center;
  justify-content: center;
  width: 20px;
  height: 20px;
  border: 1px solid ${({ $on }) => ($on ? '#b0b1b4' : 'transparent')};
  background: ${({ $on }) => ($on ? '#d9dadc' : 'none')};
`;

/* ---------- pop-ups ---------- */

const MiniToolbar = styled.div`
  position: absolute;
  top: 314px;
  left: 102px;
  width: 192px;
  border: 1px solid #aaabaf;
  background: #fcfcfd;
  box-shadow: 2px 2px 1px #8e8f94;
`;

const MiniRow = styled.div`
  display: flex;
  align-items: center;
  gap: 6px;
  height: 22px;
  padding-left: 3px;
  border-bottom: 1px solid #dddee1;

  &:last-child {
    height: 21px;
    border: 0;
  }
`;

const Highlight = styled.div`
  position: absolute;
  top: 355px;
  left: 116px;
  width: 34px;
  height: 34px;
  border-radius: 50%;
  background: #f1f56a;
  mix-blend-mode: multiply;
  opacity: 0.9;
  pointer-events: none;
`;

const Pointer = styled.div`
  position: absolute;
  top: 366px;
  left: 127px;
  pointer-events: none;
`;

const ContextMenu = styled.div`
  position: absolute;
  top: 396px;
  left: 102px;
  width: 192px;
  padding-bottom: 1px;
  border: 1px solid #aaabaf;
  background: linear-gradient(90deg, #f5f6f8 22px, #d9dbdf 22px, #fcfcfd 23px);
  box-shadow: 2px 2px 1px #8e8f94;
`;

const MenuItem = styled.button`
  display: grid;
  grid-template-columns: 18px 1fr 37px 8px;
  align-items: center;
  width: 100%;
  height: 17px;
  padding-left: 4px;
  color: #5b5c60;
  text-align: left;

  span {
    padding-left: 4px;
  }
`;

const MenuRule = styled.hr`
  height: 1px;
  margin: 3px 5px 3px 26px;
  border: 0;
  background: #e2e3e6;
`;

/* ---------- status and task bars ---------- */

const StatusBar = styled.footer`
  display: flex;
  align-items: center;
  gap: 4px;
  height: 28px;
  padding: 0 15px 0 4px;
  border-top: 1px solid #8f9094;
  background: #ecedf0;
  font-family: Roboto, 'Open Sans', sans-serif;
`;

const StatusButton = styled.button`
  display: flex;
  align-items: center;
  justify-content: center;
  width: 17px;
  height: 18px;
  border: 1px solid ${({ $on }) => ($on ? '#a9abaf' : 'transparent')};
  background: ${({ $on }) => ($on ? '#dcdde0' : 'none')};
`;

const Message = styled.p`
  display: flex;
  flex: 1;
  align-items: center;
  gap: 1px;
  margin: 0;
  padding: 0 0 3px 6px;
  font-size: 9px;
`;

const FindButton = styled.button`
  display: flex;
  align-items: center;
  gap: 6px;
  height: 20px;
  padding: 0 3px;
  border: 1px solid #bdbec2;
  background: #fafafb;
`;

const FilterSelect = styled.label`
  display: grid;
  width: 144px;
  height: 19px;
  margin-left: 28px;
  align-items: center;
  border: 1px solid #a3a4a8;
  background: #f7f7f8;

  > * {
    grid-area: 1 / 1;
  }

  select {
    width: 100%;
    padding: 0 5px;
    appearance: none;
  }
`;

const SelectCaret = styled.span`
  display: flex;
  align-items: center;
  justify-content: center;
  justify-self: end;
  width: 13px;
  height: 17px;
  border-left: 1px solid #bdbec2;
  pointer-events: none;
`;

const TaskBar = styled.nav`
  display: flex;
  justify-content: space-between;
  height: 33px;
  background: #040a12;
  color: #f1f3f5;
`;

const Tasks = styled.div`
  display: grid;
  grid-template-columns: repeat(17, 1fr);
  width: 700px;
`;

const Task = styled.button`
  display: flex;
  align-items: center;
  justify-content: center;
  border-bottom: 2px solid ${({ $open }) => ($open ? '#6ea6cf' : 'transparent')};
  background: ${({ $active }) => ($active ? '#353b42' : 'none')};
  background-clip: padding-box;
  ${({ $active }) => !$active && 'margin: 0 4px;'}
`;

const Tray = styled.div`
  display: flex;
  align-items: center;
  gap: 6px;
  padding-right: 14px;

  > svg:first-child {
    margin-right: 9px;
  }
`;

const Clock = styled.time`
  margin: 0 12px 0 6px;
  text-align: center;
  line-height: 16px;
`;

const Notices = styled.button`
  position: relative;
  width: 20px;
  height: 24px;

  svg {
    margin-bottom: 6px;
  }
`;

const Count = styled.span`
  position: absolute;
  right: 0;
  bottom: 0;
  width: 13px;
  height: 13px;
  border: 1px solid #8a9097;
  border-radius: 50%;
  background: #1f252c;
  color: #fff;
  font-size: 9px;
  line-height: 11px;
  text-align: center;
`;

/* ---------- data ---------- */

const TABS = ['File', 'Manufacturing', 'Model', 'Analysis', 'Annotate', 'Tools', 'View', 'Applications', 'Mill'];

const TREE = [
  ['planeSmall', 'NC_ASM_RIGHT'],
  ['planeSmall', 'NC_ASM_TOP'],
  ['planeSmall', 'NC_ASM_FRONT'],
  ['csys', 'NC_ASM_DEF_CSYS'],
  ['part', 'WP4.PRT', true],
  ['csys', 'ACS0'],
  ['workpiece', 'MFG0004_WRK', true],
  ['csys', 'ACS1'],
  ['machine', 'MILL01'],
  ['operation', 'OP010 [MILL01]'],
  ['step', '1. Countersinking 1 [OP010]'],
  ['insert', 'Insert Here']
];

const VIEW_TOOLS = ['zoomFit', 'zoomIn', 'zoomOut', 'repaint', 'display', 'views', 'camera', 'datums', 'annotations', 'shade', 'spin'];

const TASKS = ['start', 'taskSearch', 'taskView', 'explorer', 'mail', 'chrome', 'blueApp', 'matlab', 'sticky', 'ansys', 'vlc', 'word', 'excel', 'mendeley', 'foxit', 'remote', 'creo'];
const OPEN_TASKS = ['explorer', 'chrome', 'sticky', 'excel', 'foxit', 'creo'];

// top x, top y and width of each bare stripe on the rim
const STRIPES = [
  [84, 470, 12], [118, 530, 14], [162, 570, 13], [218, 610, 7], [288, 670, 24], [362, 700, 28],
  [440, 730, 34], [521, 750, 34], [604, 765, 42], [690, 775, 38], [780, 775, 36], [860, 765, 30],
  [944, 745, 24], [1021, 720, 17], [1098, 680, 8], [1160, 640, 14], [1212, 590, 10], [1250, 520, 8]
];

const HOLES = [[677, 153], [230, 383], [1108, 454], [662, 681]];

const LABELS = [
  ['Z', 667, 331], ['Y', 655, 334], ['Z', 665, 351], ['X', 654, 354], ['X', 687, 360],
  ['Y', 632, 366], ['X', 663, 370], ['Y', 652, 376], ['Z', 629, 386], ['Z', 651, 411]
];

const Part = () => (
  <Scene viewBox="292 138 988 521" role="img" aria-label="Milled part">
    <defs>
      <linearGradient id="rim">
        <stop offset="0" stopColor="#63a593" />
        <stop offset="0.550" stopColor="#58998a" />
        <stop offset="0.800" stopColor="#437c6d" />
        <stop offset="1" stopColor="#40756a" />
      </linearGradient>
      <linearGradient id="hole">
        <stop offset="0" stopColor="#4c8777" />
        <stop offset="0.450" stopColor="#67a897" />
        <stop offset="1" stopColor="#6fb2a1" />
      </linearGradient>
      <clipPath id="topClip">
        <ellipse cx="673" cy="418" rx="603" ry="365" transform="rotate(5 673 418)" />
      </clipPath>
      <clipPath id="rimClip">
        <path d="M71 385L58 492A602 365 5 0 0 1260 577L1275 451z" />
      </clipPath>
    </defs>
    <g transform="translate(440 210) scale(0.333333)">
      <g clipPath="url(#rimClip)">
        <path d="M40 380h1250v560H40z" fill="url(#rim)" />
        {STRIPES.map(([x, y, w]) => (
          <path key={x} d={`M${x} ${y}h${w}l-16 160h-${w}z`} fill={x > 1000 ? '#5f6d75' : '#8a909f'} />
        ))}
      </g>
      <g clipPath="url(#topClip)">
        <path d="M40 30h1260v780H40z" fill="#999fb3" />
        <g fill="#64a394" stroke="#64a394" strokeWidth="6" strokeLinejoin="round">
          <path d="M100 195L160 198 200 212 245 217 290 211 320 205 345 212 370 219 400 214 430 205 498 196 430 188 510 181 600 186 600 208 628 215 648 196 740 196 752 220 785 220 800 200 895 194 910 208 935 220 1005 208 1035 225 1070 240 1105 243 1145 238 1240 220 1100 30 660 60 590 74 430 72 300 60z" />
          <path d="M195 275L210 242 235 228 275 236 290 265 300 293 340 296 370 290 413 320 420 352 400 366 330 366 280 350 230 344 170 354 125 354 110 330 160 315 195 292z" />
          <path d="M335 250L346 238 390 240 398 260 395 283 365 287 337 280z" />
          <path d="M447 330L470 320 508 337 513 353 475 363 447 350z" />
          <path d="M603 260L650 258 692 284 645 293 603 288z" />
          <path d="M708 278L745 263 800 263 830 288 780 315 735 302z" />
          <path d="M610 338L630 332 672 340 672 368 640 372 612 360z" />
          <path d="M748 342L762 333 800 333 803 372 775 382 752 365z" />
          <path d="M883 292L935 264 965 267 1008 295 976 330 978 390 930 390 923 330z" />
          <path d="M1018 292L1047 263 1133 261 1168 305 1138 345 1138 396 1058 394 1048 325z" />
          <path d="M1178 300L1210 294 1245 328 1190 326z" />
          <path d="M60 402L150 398 235 396 420 402 640 412 700 415 860 406 1060 428 1290 418 1290 590 1215 590 1000 574 985 592 960 592 920 572 895 556 840 545 740 540 720 560 680 568 655 550 600 532 550 534 510 556 485 552 440 538 360 538 310 546 294 566 300 600 330 622 345 650 375 672 362 705 290 680 200 625 206 612 196 546 150 524 118 512 60 470z" />
          <path d="M478 622L522 624 534 650 556 666 522 676 516 708 480 710 478 676 450 668 474 650z" />
          <path d="M968 628L994 654 1000 690 1014 710 1000 752 970 755 958 722 912 715 945 690 950 650z" />
          <path d="M735 702L910 706 910 712 790 710zM765 768L870 764 860 774 770 772z" />
        </g>
        <g fill="#64a394">
          <path d="M270 355l260 4 120 12-100 8-280-6zM700 382l230 8-100 7-140-4z" />
          <path d="M320 638l280 10-70 7-210-12zM740 642l280 10-120 8-160-10zM380 665l150 8-90 8zM440 710l160 5-110 2zM540 732l380-2-160 5z" />
        </g>
        <g fill="#999fb3">
          <path d="M495 93L600 94 642 110 600 122 470 118 640 134 630 140 432 136 440 124 470 118 478 102z" />
          <path d="M828 135l26-10 20 12-4 18-26 12 6-14zM780 176l60-8 54 8-14 10-90-2zM988 155l12 2-2 24-10-10z" />
          <path d="M300 411l300 6 80 6-200-2zM330 426l310 14-30 3zM420 384l200 0-150 5zM120 425l260 10-60 4z" />
          <path d="M820 450l70 2 50 8-110-2zM700 468l330 12 20 10-200-14z" />
          <path d="M550 466l24 2-6 24 16 18-20 2-14-26zM838 480l58 4-8 14-10 16-18 6-20-20zM1010 492l34 2-8 18-8 16-8-16zM1150 500l32 6 22-30-2 20 8 18-18 10-12 28-14-26z" />
          <path d="M300 370l80 2-70 5z" />
        </g>
        <path d="M440 105l220 14M480 112l140 6M440 182l320 16M760 118l140 8M300 400l600 12M350 445l400 12M700 425l560 25M1060 418l180-8M560 640l150 12M720 735l200-8M700 468l140 10" fill="none" stroke="#64a394" strokeWidth="3" />
        <path d="M250 442l280 8M800 425l200 14M740 500l160 2" fill="none" stroke="#8ba39f" strokeWidth="2" />
      </g>
      {HOLES.map(([x, y]) => (
        <g key={x}>
          <ellipse cx={x} cy={y} rx="71" ry="45" fill="url(#hole)" transform={`rotate(4 ${x} ${y})`} />
          <path d={`M${x - 36} ${y + 32}q38-32 80 2q-6 6-24 10q-34 2-56-12z`} fill="#477f70" />
        </g>
      ))}
      <g fill="none" stroke="#57505a" strokeWidth="2">
        <path d="M60 122L1282 217 1264 956 38 861z" />
        <path d="M62 365L1285 460M50 498L1272 593M683 42L650 915M674 170L662 780" />
        <path d="M62 365L50 498M1285 460L1272 593" stroke="#a15668" strokeDasharray="12 6" />
        <path d="M235 370L220 515M1115 440L1100 590" strokeDasharray="12 6" strokeWidth="1" />
        <path d="M666 300L652 780" stroke="#8d5058" />
        <path d="M670 412l60 10M600 532l60 8M665 560L960 556" stroke="#8a4a55" />
      </g>
      <path d="M610 476h54" stroke="#49d04b" strokeWidth="4" />
      <path d="M664 478v24" stroke="#3a62c9" strokeWidth="3" />
      <path d="M664 437h10v24h-10z" fill="#ea2b35" />
      <path d="M660 503h12v12h-12z" fill="#3fe0dc" />
    </g>
    <g fill="#2b2b30" fontFamily="'Liberation Sans', sans-serif" fontSize="9">
      {LABELS.map(([text, x, y]) => (
        <text key={`${x}-${y}`} x={x} y={y}>{text}</text>
      ))}
    </g>
    <g fill="#5d5a60" fontFamily="'Liberation Sans', sans-serif" fontSize="9">
      <text x="635" y="359">ACS</text>
      <text x="664" y="379">ACS80</text>
      <text x="661" y="399">RCTA3M_DEDEFCSYS</text>
    </g>
  </Scene>
);

const Mini = ({ names, caret }) => (
  <MiniRow>
    {names.map(name => (
      <IconButton key={name} aria-label={name}>
        <Icon name={name} />
      </IconButton>
    ))}
    {caret && <Caret />}
  </MiniRow>
);

const Entry = ({ icon, label, hint, arrow }) => (
  <MenuItem>
    {icon ? <Icon name={icon} size={13} /> : <i />}
    <span>{label}</span>
    <kbd>{hint}</kbd>
    {arrow && <Icon name="expand" size={7} />}
  </MenuItem>
);

const Cycle = ({ name, caret }) => (
  <IconButton $gap={5} aria-label={name}>
    <Icon name={name} />
    {caret && <Caret />}
  </IconButton>
);

const App = () => (
  <Page>
    <GlobalStyle />
    <TitleBar>
      <QuickAccess>
        <IconButton aria-label="Creo"><Icon name="creo" /></IconButton>
        <Divider />
        <IconButton aria-label="New"><Icon name="newFile" /></IconButton>
        <IconButton aria-label="Open"><Icon name="open" /></IconButton>
        <IconButton aria-label="Save"><Icon name="save" /></IconButton>
        <IconButton $gap={5} aria-label="Undo"><Icon name="undo" /><Caret color="#b1b3b5" /></IconButton>
        <IconButton $gap={5} aria-label="Redo"><Icon name="redo" /><Caret color="#b1b3b5" /></IconButton>
        <IconButton $gap={5} aria-label="Regenerate"><Icon name="regenSmall" /><Caret /></IconButton>
        <IconButton $gap={5} aria-label="Windows"><Icon name="windows" /><Caret /></IconButton>
        <IconButton aria-label="Close window"><Icon name="closeWindow" size={12} /></IconButton>
        <Divider />
        <IconButton aria-label="Customize toolbar"><Caret color="#333" /></IconButton>
      </QuickAccess>
      <Title>MFG0004 (Active) - Creo Parametric 5.0</Title>
      <WindowControls>
        <IconButton aria-label="Minimize"><Icon name="minimize" size={10} /></IconButton>
        <IconButton aria-label="Restore"><Icon name="restore" size={10} /></IconButton>
        <IconButton aria-label="Close"><Icon name="close" size={10} /></IconButton>
      </WindowControls>
    </TitleBar>

    <TabBar>
      {TABS.map(tab => (
        <RibbonTab key={tab} $file={tab === 'File'} $active={tab === 'Mill'}>{tab}</RibbonTab>
      ))}
      <TabTools>
        <IconButton aria-label="Collapse ribbon"><Icon name="chevronUp" size={12} /></IconButton>
        <IconButton aria-label="Search"><Icon name="search" size={13} /></IconButton>
        <IconButton $gap={5} aria-label="Learning"><Icon name="learn" size={13} /><Caret /></IconButton>
        <IconButton aria-label="Help"><Icon name="help" size={13} /></IconButton>
      </TabTools>
    </TabBar>

    <Ribbon>
      <RibbonGroup label="Operate" width={93} columns="62px 1fr">
        <Big icon="regenerate" label="Regenerate" caret />
        <Rows gap={5} items={[['copy', ''], ['paste', '', true], ['cross', '', true]]} />
      </RibbonGroup>
      <RibbonGroup label="Edit" width={42} columns="1fr">
        <Big icon="pattern" label="Pattern" caret />
      </RibbonGroup>
      <RibbonGroup label="Datum" width={105} columns="38px 27px 1fr">
        <Big icon="plane" label="Plane" />
        <Rows gap={5} items={[['axis', ''], ['points', '', true], ['csys', '']]} />
        <Big icon="sketch" label="Sketch" />
      </RibbonGroup>
      <RibbonGroup label="Manufacturing Geometry" width={127} columns="50px 1fr">
        <Big icon="millWindow" label="Mill" second="Window" />
        <Rows gap={3} items={[['millVolume', 'Mill Volume'], ['millSurface', 'Mill Surface'], ['drillGroup', 'Drill Group']]} />
      </RibbonGroup>
      <RibbonGroup label="Milling" width={472} columns="55px 70px 88px 115px 92px 1fr">
        <Big icon="roughing" label="Roughing" />
        <Rows items={[['rerough', 'Re-rough'], ['finishing', 'Finishing'], ['restFinish', 'Rest Finish']]} />
        <Rows items={[['face', 'Face'], ['volumeRough', 'Volume Rough'], ['profile', 'Profile Milling']]} />
        <Rows items={[['conventional', 'Conventional Milling'], ['conventional', 'Cut Line Milling'], ['engraving', 'Engraving']]} />
        <Rows items={[['round', 'Round'], ['chamfer', 'Chamfer'], ['twoAxis', '2 Axis Trajectory']]} />
        <Big icon="trajectory" label="Trajectory" />
      </RibbonGroup>
      <RibbonGroup label="High Speed Milling" width={195} columns="5px 98px 1fr" plain>
        <i />
        <Rows gap={3} items={[['volumeRough', 'HSM Rough'], ['volumeRough', 'HSM Rest Rough'], ['finishing', 'HSM Finish']]} />
        <Rows gap={3} items={[['restFinish', 'HSM Rest Finish']]} />
      </RibbonGroup>
      <RibbonGroup label="Holemaking Cycles" width={134} columns="52px 1fr">
        <Big icon="standard" label="Standard" />
        <CycleGrid>
          <Cycle name="drillDeep" caret />
          <Cycle name="drillTap" />
          <Cycle name="drillWeb" />
          <Cycle name="drillFace" caret />
          <Cycle name="drillBore" caret />
          <Cycle name="drillSink" />
          <Cycle name="drillRib" />
          <Cycle name="drillFlat" />
        </CycleGrid>
      </RibbonGroup>
      <RibbonFill />
    </Ribbon>

    <Main>
      <Sidebar>
        <PanelTabs>
          <PanelTab $active><Icon name="tree" />Model Tree</PanelTab>
          <PanelTab><Icon name="folders" />Folder Browser</PanelTab>
          <PanelTab><Icon name="favorites" />Favorites</PanelTab>
        </PanelTabs>
        <PanelHead>
          <h2>Model Tree</h2>
          <IconButton $gap={6} aria-label="Settings"><Icon name="tools" size={15} /><Caret /></IconButton>
          <IconButton $gap={6} aria-label="Show"><Icon name="listFile" size={15} /><Caret /></IconButton>
          <IconButton aria-label="Hide tree"><Icon name="treeHidden" size={18} /></IconButton>
        </PanelHead>
        <SearchRow>
          <Icon name="filter" />
          <SearchBox>
            <input type="text" aria-label="Filter tree" />
            <IconButton aria-label="Clear"><Icon name="close" size={8} /></IconButton>
          </SearchBox>
          <IconButton aria-label="Filter options"><Caret /></IconButton>
          <IconButton aria-label="Add"><Icon name="plus" size={16} /></IconButton>
        </SearchRow>
        <Tree>
          <TreeRow $root><Icon name="assembly" size={13} /><span>MFG0004.ASM</span></TreeRow>
          {TREE.map(([icon, label, open]) => (
            <TreeRow key={label} $selected={icon === 'step'}>
              <Twisty>{open && <Icon name="expand" size={8} />}</Twisty>
              <Icon name={icon} size={13} />
              <span>{label}</span>
            </TreeRow>
          ))}
        </Tree>
      </Sidebar>
      <Viewport>
        <Part />
        <ViewTools>
          {VIEW_TOOLS.map(name => (
            <ViewTool key={name} aria-label={name} $on={name === 'annotations' || name === 'spin'}>
              <Icon name={name} />
            </ViewTool>
          ))}
        </ViewTools>
      </Viewport>
    </Main>

    <StatusBar>
      <StatusButton $on aria-label="Navigator"><Icon name="tree" /></StatusButton>
      <StatusButton aria-label="Browser"><Icon name="globe" /></StatusButton>
      <StatusButton aria-label="Full screen"><Icon name="pane" /></StatusButton>
      <Message><Icon name="relations" size={10} />No relations have been defined for this model.</Message>
      <Divider $tall />
      <FindButton aria-label="Find"><Icon name="binoculars" /><Caret /></FindButton>
      <span>1 selected</span>
      <FilterSelect>
        <select aria-label="Selection filter" defaultValue="Geometry">
          <option>Geometry</option>
        </select>
        <SelectCaret><Caret /></SelectCaret>
      </FilterSelect>
    </StatusBar>

    <TaskBar>
      <Tasks>
        {TASKS.map(name => (
          <Task key={name} aria-label={name} $open={OPEN_TASKS.includes(name)} $active={name === 'creo'}>
            <Icon name={name} size={name === 'start' || name.startsWith('task') ? 15 : 20} />
          </Task>
        ))}
      </Tasks>
      <Tray>
        <Icon name="people" />
        <Icon name="trayUp" />
        <Icon name="battery" />
        <Icon name="wifi" size={12} />
        <Icon name="speaker" size={15} />
        <Clock>2:39 AM<br />3/5/2019</Clock>
        <Notices aria-label="Notifications">
          <svg width="15" height="15" viewBox="0 0 15 15">
            <path d="M0 0h14v12H9l-3 3v-3H0z" fill="#f1f3f5" />
            <path d="M3 3h8M3 6h8M3 9h5" stroke="#0c1219" />
          </svg>
          <Count>3</Count>
        </Notices>
      </Tray>
    </TaskBar>

    <MiniToolbar>
      <Mini names={['paint', 'chain', 'spheres', 'editStep', 'toolPath', 'copySave', 'patternSmall', 'treeFlag']} caret />
      <Mini names={['mirror', 'listSave']} />
      <Mini names={['toolBlock', 'playStep', 'stepEye', 'chainEye']} />
    </MiniToolbar>
    <ContextMenu>
      <Entry icon="copy" label="Copy" hint="Ctrl+C" />
      <MenuRule />
      <Entry icon="note" label="Create a Note" arrow />
      <MenuRule />
      <Entry label="Save Step Parameters" />
      <Entry icon="cross" label="Delete" hint="Del" />
      <MenuRule />
      <Entry icon="info" label="Information" arrow />
      <MenuRule />
      <Entry label="Customize" />
    </ContextMenu>
    <Highlight />
    <Pointer><Icon name="cursor" size={13} /></Pointer>
  </Page>
);

export default App;
